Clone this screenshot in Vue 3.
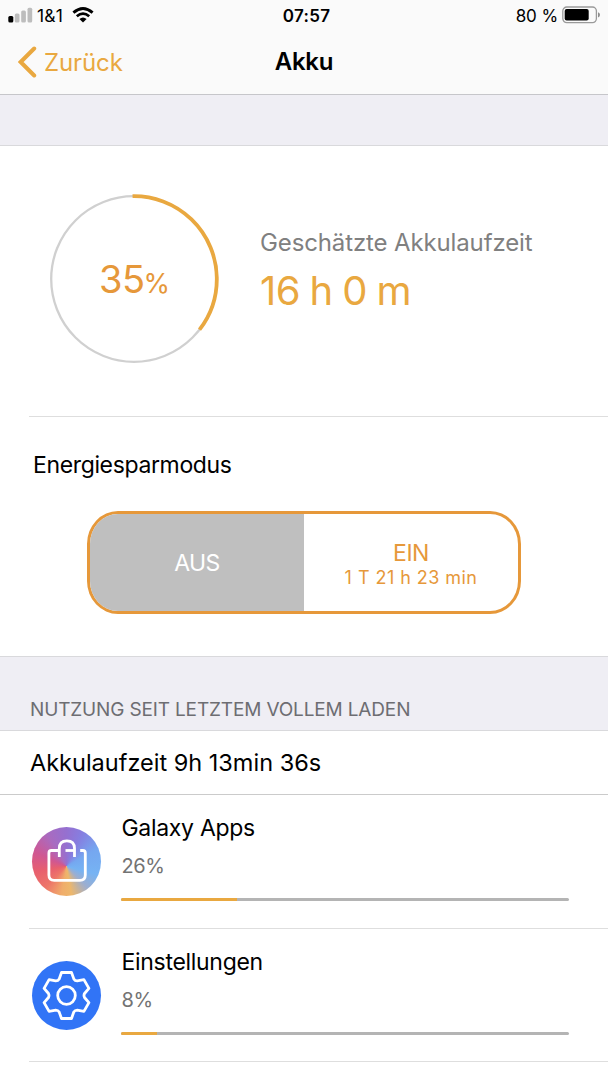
<script setup>
import { ref } from 'vue';

const charge = ref(35);
const powerSaving = ref(false);

const apps = ref([
  { name: 'Galaxy Apps', usage: 26, icon: 'bag' },
  { name: 'Einstellungen', usage: 8, icon: 'gear' },
]);

// Ring
const radius = 82.8;
const circumference = 2 * Math.PI * radius;

// Gear outline: one tooth plus one valley, turned six times
const tooth = [[-5, -23], [5, -23], [7.3, -16.6], [8.5, -14.7], [10.7, -14.6]];
const gearPath = () => {
  let d = '';
  for (let i = 0; i < 6; i++) {
    const a = (i * Math.PI) / 3;
    const p = tooth.map(([x, y]) =>
      `${(x * Math.cos(a) - y * Math.sin(a)).toFixed(2)} ${(x * Math.sin(a) + y * Math.cos(a)).toFixed(2)}`
    );
    d += `${i ? 'L' : 'M'}${p[0]}L${p[1]}L${p[2]}Q${p[3]} ${p[4]}`;
  }
  return d + 'Z';
};
</script>

<template>
  <div class="screen">
    <header class="top">
      <div class="status-bar">
        <div class="carrier">
          <svg class="signal" width="25" height="16" viewBox="0 0 25 16">
            <rect x="0.3" y="9" width="5" height="6.5" rx="1.5" fill="#000" />
            <rect x="6.8" y="6.5" width="4.7" height="9" rx="1.5" fill="#bdbdbd" />
            <rect x="13.2" y="3.5" width="4.7" height="12" rx="1.5" fill="#bdbdbd" />
            <rect x="19.5" y="0.8" width="4.7" height="14.7" rx="1.5" fill="#bdbdbd" />
          </svg>
          <span class="carrier-name">1&amp;1</span>
          <svg class="wifi" width="22" height="16" viewBox="0 0 22 16">
            <path d="M1.4 5.7Q11 -2.5 20.6 5.7" fill="none" stroke="#000" stroke-width="2.9" />
            <path d="M4.8 9.2Q11 4 17.2 9.2" fill="none" stroke="#000" stroke-width="2.8" />
            <path d="M7.4 12Q11 9 14.6 12L11 15.6Z" fill="#000" />
          </svg>
        </div>
        <span class="clock">07:57</span>
        <div class="battery">
          <span class="battery-level">80 %</span>
          <svg width="39" height="18" viewBox="0 0 39 18">
            <rect x="0.8" y="1" width="33.6" height="15.6" rx="4" fill="none" stroke="#9a9a9a" stroke-width="1.3" />
            <rect x="2.7" y="3" width="24" height="11.6" rx="2" fill="#000" />
            <path d="M36 6.2Q38 6.7 38 8.8T36 11.4Z" fill="#8e8e8e" />
          </svg>
        </div>
      </div>
      <nav class="nav-bar">
        <button class="back">
          <svg width="19" height="32" viewBox="0 0 19 32">
            <path d="M16.2 2.5L2.7 16L16.2 29.5" fill="none" stroke="#e9a840" stroke-width="4" stroke-linecap="round" />
          </svg>
          <span class="back-label">Zurück</span>
        </button>
        <h1>Akku</h1>
      </nav>
    </header>

    <div class="gap"></div>

    <section class="overview">
      <div class="estimate">
        <div class="ring">
          <svg width="170" height="170" viewBox="0 0 170 170">
            <circle cx="85" cy="85" :r="radius" fill="none" stroke="#d0d0d0" stroke-width="2.3" />
            <circle
              cx="85" cy="85" :r="radius" fill="none" stroke="#e9a840" stroke-width="3.8"
              :stroke-dasharray="`${(circumference * (charge + 0.7)) / 100} ${circumference}`"
              transform="rotate(-91 85 85)"
            />
          </svg>
          <div class="ring-value">{{ charge }}<small>%</small></div>
        </div>
        <div class="estimate-text">
          <p class="caption">Geschätzte Akkulaufzeit</p>
          <p class="remaining">16 h 0 m</p>
        </div>
      </div>

      <div class="saving">
        <h2>Energiesparmodus</h2>
        <div class="toggle">
          <button class="option" :class="{ selected: !powerSaving }" @click="powerSaving = false">
            <span class="off">AUS</span>
          </button>
          <button class="option" :class="{ selected: powerSaving }" @click="powerSaving = true">
            <span class="on">EIN</span>
            <span class="duration">1 T 21 h 23 min</span>
          </button>
        </div>
      </div>
    </section>

    <h3 class="section-title"><span>NUTZUNG SEIT LETZTEM VOLLEM LADEN</span></h3>
    <div class="runtime"><span>Akkulaufzeit 9h 13min 36s</span></div>

    <ul class="apps">
      <li v-for="app in apps" :key="app.name">
        <div class="app-icon" :class="app.icon">
          <svg v-if="app.icon === 'bag'" viewBox="-34.5 -34.5 69 69">
            <g fill="none" stroke="#fff" stroke-width="2.8" stroke-linecap="butt">
              <path d="M-7.2 -11H-15.2Q-17.6 -11 -17.6 -8.6V13.5Q-17.6 18.8 -12.3 18.8H13.5Q18.8 18.8 18.8 13.5V-8.6Q18.8 -11 16.4 -11H13.7" />
              <path d="M-7.2 -4.6V-13Q-7.2 -20.6 0.4 -20.6T8 -13V-4.6" />
              <path d="M-1 -11H8" />
            </g>
          </svg>
          <svg v-else viewBox="-34.5 -34.5 69 69">
            <g fill="none" stroke="#fff" stroke-width="2.8" stroke-linejoin="round">
              <path :d="gearPath()" />
              <circle r="8.8" />
            </g>
          </svg>
        </div>
        <div class="app-info">
          <span class="app-name">{{ app.name }}</span>
          <span class="app-usage">{{ app.usage }}%</span>
          <div class="bar"><div class="fill" :style="{ width: app.usage + '%' }"></div></div>
        </div>
      </li>
    </ul>
  </div>
</template>

<style>
body { margin: 0; background: #fff; }
</style>

<style scoped>
.screen {
  width: 608px;
  height: 1080px;
  overflow: hidden;
  background: #fff;
  color: #000;
  font-family: Inter, "Liberation Sans", sans-serif;
}
.screen * { box-sizing: border-box; }
h1, h2, h3, p, ul { margin: 0; padding: 0; font-weight: 400; }
button { border: 0; padding: 0; background: none; font: inherit; color: inherit; }
svg { display: block; flex: none; }
span, h1, h2, p { white-space: nowrap; }

/* Status and navigation */
.top { height: 95px; background: #fafafa; border-bottom: 1px solid #c6c6ca; }
.status-bar { display: grid; grid-template-columns: 1fr auto 1fr; height: 30px; padding: 0 7px 0 8px; align-items: center; }
.carrier { display: flex; align-items: center; }
.carrier-name { font-size: 17.5px; letter-spacing: 0.2px; margin: 1px 0 0 4px; }
.wifi { margin-left: 9px; }
.clock { font-size: 17px; font-weight: 600; letter-spacing: 0.3px; margin: 1px 0 0 4px; }
.battery { display: flex; align-items: center; justify-content: flex-end; gap: 4px; }
.battery-level { font-size: 17px; margin-top: 1px; letter-spacing: -0.1px; }
.nav-bar { display: grid; grid-template-columns: 1fr auto 1fr; height: 63px; align-items: center; padding: 0 18px; }
.back { display: flex; align-items: center; gap: 7px; color: #e9a840; }
.back-label { font-size: 24px; letter-spacing: -0.1px; padding-top: 1px; }
h1 { font-size: 24px; font-weight: 600; letter-spacing: -0.3px; }

.gap { height: 51px; background: #efeef4; border-bottom: 1px solid #d9d9dc; }

/* Charge overview */
.overview { height: 510px; }
.estimate { display: flex; height: 271px; margin-left: 29px; padding: 48px 0 0 20px; border-bottom: 1px solid #dedede; }
.ring { display: grid; width: 170px; height: 170px; }
.ring > * { grid-area: 1 / 1; }
.ring-value { place-self: center; padding: 4px 0 0 1px; color: #e6983a; font-size: 38px; line-height: 46px; letter-spacing: -0.5px; }
.ring-value small { font-size: 27px; letter-spacing: 0; margin-left: -1px; }
.estimate-text { padding: 34px 0 0 41px; }
.caption { font-size: 24px; line-height: 30px; letter-spacing: -0.13px; color: #808080; }
.remaining { font-size: 40px; line-height: 48px; margin-top: 9px; color: #e9a840; letter-spacing: -0.4px; word-spacing: -1.5px; }
.saving { padding: 33px 87px 0; }
h2 { font-size: 23px; line-height: 30px; margin-left: -54px; letter-spacing: -0.36px; }
.toggle { display: flex; height: 103px; margin-top: 31px; border: 3px solid #e6983a; border-radius: 31px / 33px; overflow: hidden; }
.option { flex: 1; display: flex; flex-direction: column; align-items: center; justify-content: center; padding-top: 1px; color: #e6983a; font-size: 23px; }
.option.selected { background: #bfbfbf; color: #fff; }
.off { letter-spacing: -0.6px; }
.on { line-height: 26px; margin-top: 3px; letter-spacing: -0.5px; }
.duration { font-size: 18px; line-height: 23px; letter-spacing: 0.45px; }

/* Usage list */
.section-title { height: 75px; padding: 40px 0 0 30px; background: #efeef4; border: solid #d9d9dc; border-width: 1px 0; font-size: 19px; line-height: 26px; letter-spacing: -0.15px; color: #6d6d72; }
.runtime { height: 64px; padding: 17px 0 0 30px; border-bottom: 1px solid #cbcbcb; font-size: 23.5px; line-height: 30px; letter-spacing: 0; }
.apps { list-style: none; margin-left: 29px; }
li { display: flex; height: 133.5px; border-bottom: 1px solid #dedede; }
.app-icon { width: 69px; height: 69px; margin: 32px 0 0 3px; border-radius: 50%; }
.bag { background: conic-gradient(from 0deg at 50% 57%, #9570d0 0deg, #867ee0 25deg, #75a7f0 60deg, #76b3f3 105deg, #9caed0 135deg, #edb76c 170deg, #f0ad6b 190deg, #ed7569 225deg, #e8606e 260deg, #cf5793 295deg, #a96bc0 330deg, #9570d0 360deg); }
.gear { background: #3174f6; }
.app-info { display: flex; flex-direction: column; margin-left: 20px; padding-top: 18px; width: 448px; }
.app-name { font-size: 23px; line-height: 31px; margin-left: 0.5px; letter-spacing: -0.3px; }
.app-usage { margin: 9px 0 0 0.5px; font-size: 20px; line-height: 26px; color: #737373; letter-spacing: -0.4px; }
.bar { width: 448px; height: 3px; margin-top: 19px; border-radius: 2px; background: #b4b4b4; overflow: hidden; }
.fill { height: 100%; background: #e9a840; }
</style>
